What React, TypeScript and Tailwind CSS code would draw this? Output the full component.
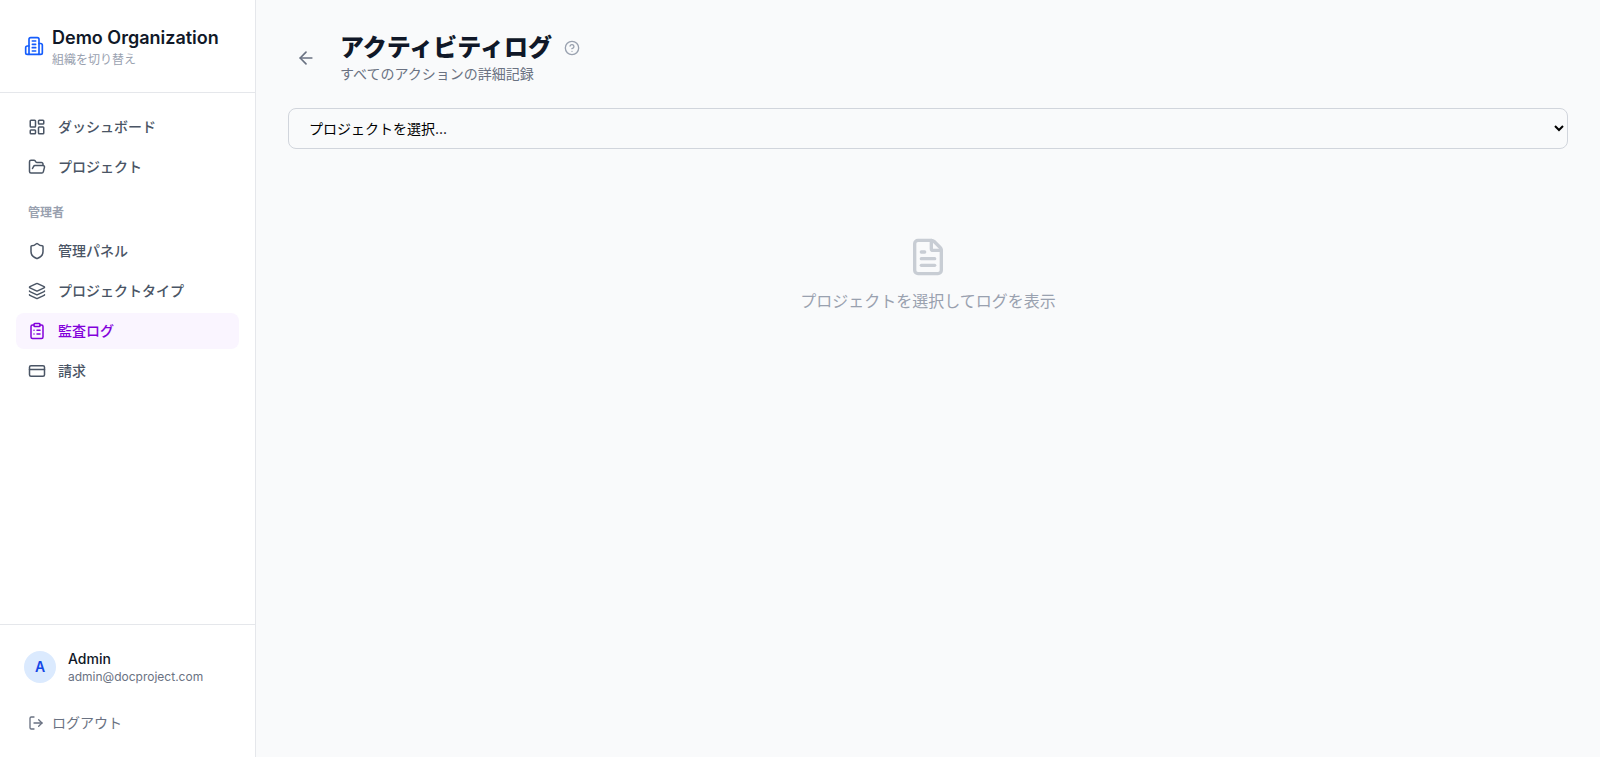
import {
  ArrowLeft,
  CircleHelp,
  ClipboardList,
  CreditCard,
  FileText,
  FolderOpen,
  Layers,
  LayoutDashboard,
  LogOut,
  Shield,
  type LucideIcon,
} from 'lucide-react';

type NavItem = { label: string; icon: LucideIcon; active?: boolean };

const mainItems: NavItem[] = [
  { label: 'ダッシュボード', icon: LayoutDashboard },
  { label: 'プロジェクト', icon: FolderOpen },
];

const adminItems: NavItem[] = [
  { label: '管理パネル', icon: Shield },
  { label: 'プロジェクトタイプ', icon: Layers },
  { label: '監査ログ', icon: ClipboardList, active: true },
  { label: '請求', icon: CreditCard },
];

function BuildingIcon() {
  return (
    <svg
      viewBox="0 0 24 24"
      fill="none"
      stroke="currentColor"
      strokeWidth="2"
      strokeLinecap="round"
      strokeLinejoin="round"
      aria-hidden="true"
      className="size-5 shrink-0 text-blue-600"
    >
      <path d="M6 22V4a2 2 0 0 1 2-2h8a2 2 0 0 1 2 2v18Z" />
      <path d="M6 12H4a2 2 0 0 0-2 2v6a2 2 0 0 0 2 2h2" />
      <path d="M18 9h2a2 2 0 0 1 2 2v9a2 2 0 0 1-2 2h-2" />
      <path d="M10 6h4" />
      <path d="M10 10h4" />
      <path d="M10 14h4" />
      <path d="M10 18h4" />
    </svg>
  );
}

function NavLink({ label, icon: Icon, active }: NavItem) {
  return (
    <a
      href="#"
      aria-current={active ? 'page' : undefined}
      className={
        active
          ? 'flex items-center gap-3 rounded-lg bg-purple-50 px-3 py-2 text-sm font-medium text-purple-700'
          : 'flex items-center gap-3 rounded-lg px-3 py-2 text-sm font-medium text-gray-600 hover:bg-gray-50'
      }
    >
      <Icon size={18} />
      {label}
    </a>
  );
}

function Sidebar() {
  return (
    <aside className="flex w-64 shrink-0 flex-col border-r border-gray-200 bg-white">
      <div className="border-b border-gray-200 p-6">
        <a href="#" className="flex items-center gap-2">
          <BuildingIcon />
          <div>
            <div className="text-lg font-semibold text-gray-900">Demo Organization</div>
            <div className="text-xs text-gray-400">組織を切り替え</div>
          </div>
        </a>
      </div>
      <nav className="flex flex-1 flex-col gap-1 p-4">
        {mainItems.map((item) => (
          <NavLink key={item.label} {...item} />
        ))}
        <h2 className="px-3 pt-4 pb-2 text-xs font-semibold text-gray-400">管理者</h2>
        {adminItems.map((item) => (
          <NavLink key={item.label} {...item} />
        ))}
      </nav>
      <div className="border-t border-gray-200 p-4">
        <div className="mb-3 flex items-center gap-3 p-2">
          <div className="flex size-8 items-center justify-center rounded-full bg-blue-100 text-sm font-semibold text-blue-700">
            A
          </div>
          <div>
            <div className="text-sm font-medium text-gray-900">Admin</div>
            <div className="text-xs text-gray-500">admin@docproject.com</div>
          </div>
        </div>
        <button type="button" className="flex w-full items-center gap-2 rounded-lg px-3 py-2 text-sm text-gray-500">
          <LogOut size={16} />
          ログアウト
        </button>
      </div>
    </aside>
  );
}

export default function App() {
  return (
    <div className="flex min-h-screen bg-gray-50 font-['Inter','Noto_Sans_CJK_JP',sans-serif]" lang="ja">
      <Sidebar />
      <main className="min-w-0 flex-1 p-8">
        <header className="mb-6 flex items-center gap-4">
          <button type="button" aria-label="戻る" className="rounded-lg p-2 text-gray-500">
            <ArrowLeft size={20} />
          </button>
          <div>
            <div className="flex items-center gap-3">
              <h1 className="text-2xl font-extrabold text-gray-900">アクティビティログ</h1>
              <button type="button" aria-label="ヘルプ" className="text-gray-400">
                <CircleHelp size={16} />
              </button>
            </div>
            <p className="text-sm text-gray-500">すべてのアクションの詳細記録</p>
          </div>
        </header>
        <select
          aria-label="プロジェクト"
          className="mb-6 block w-full rounded-lg border border-gray-300 px-4 py-2.5 text-sm text-black"
        >
          <option>プロジェクトを選択...</option>
        </select>
        <div className="flex flex-col items-center py-16 text-gray-400">
          <FileText size={40} className="mb-3 opacity-50" />
          <p>プロジェクトを選択してログを表示</p>
        </div>
      </main>
    </div>
  );
}
